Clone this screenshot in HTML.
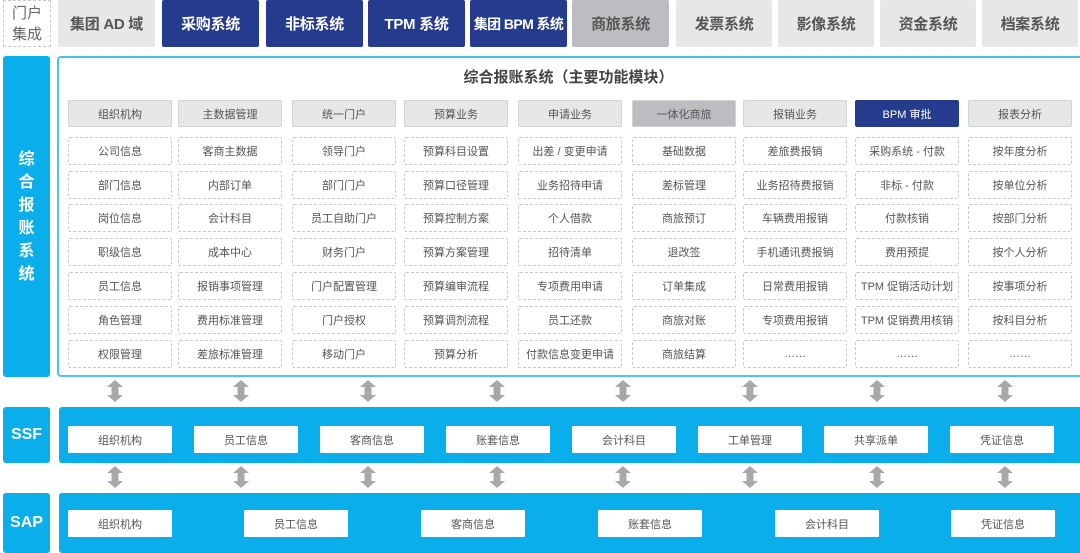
<!DOCTYPE html>
<html><head><meta charset="utf-8"><style>
*{margin:0;padding:0;box-sizing:border-box}
body{width:1080px;height:553px;background:#fff;position:relative;overflow:hidden;font-family:"Liberation Sans","Noto Sans CJK SC",sans-serif;color:#555}
.a{position:absolute;display:flex;align-items:center;justify-content:center;text-align:center;white-space:nowrap}
.t{top:0;height:47px;font-size:15px;font-weight:bold;border-radius:2px;letter-spacing:-0.3px}
.g{background:#e6e7e9;color:#555}
.n{background:#253b8d;color:#fff}
.d{background:#bcbdc0;color:#555}
.h{height:27px;font-size:11px;border:1px solid #d2d3d5;border-radius:2px;background:#e6e7e9;color:#555}
.c{height:28px;font-size:11px;border:1px dashed #c9c9c9;border-radius:2px;color:#555}
.b{background:#0aaeeb;color:#fff;font-weight:bold;border-radius:3px}
.w{background:#fff;height:27px;font-size:11px;color:#555;border-radius:1px}
</style></head><body>
<div class="a" style="left:3px;top:0;width:48px;height:47px;border:1px dashed #c9c9c9;font-size:15px;line-height:21px;color:#666;white-space:normal">门户<br>集成</div>
<div class="a t g" style="left:58px;width:97px">集团 AD 域</div>
<div class="a t n" style="left:162px;width:97px">采购系统</div>
<div class="a t n" style="left:266px;width:97px">非标系统</div>
<div class="a t n" style="left:368px;width:97px">TPM 系统</div>
<div class="a t n" style="left:470px;width:97px;font-size:14px;letter-spacing:-0.6px">集团 BPM 系统</div>
<div class="a t d" style="left:572px;width:97px">商旅系统</div>
<div class="a t g" style="left:676px;width:96px">发票系统</div>
<div class="a t g" style="left:778px;width:96px">影像系统</div>
<div class="a t g" style="left:880px;width:96px">资金系统</div>
<div class="a t g" style="left:982px;width:96px">档案系统</div>

<div class="a b" style="left:3px;top:56px;width:47px;height:321px;font-size:16px;line-height:23px;white-space:normal">综<br>合<br>报<br>账<br>系<br>统</div>
<div style="position:absolute;left:57px;top:56px;width:1030px;height:321px;border:2px solid #4cc3ee;border-radius:4px"></div>
<div class="a" style="left:57px;top:64px;width:1023px;height:24px;font-size:15px;font-weight:bold;color:#444">综合报账系统（主要功能模块）</div>

<div class="a h" style="left:68px;top:100px;width:104px">组织机构</div>
<div class="a h" style="left:178px;top:100px;width:104px">主数据管理</div>
<div class="a h" style="left:292px;top:100px;width:104px">统一门户</div>
<div class="a h" style="left:404px;top:100px;width:104px">预算业务</div>
<div class="a h" style="left:518px;top:100px;width:104px">申请业务</div>
<div class="a h" style="left:632px;top:100px;width:104px;background:#bcbdc0">一体化商旅</div>
<div class="a h" style="left:743px;top:100px;width:104px">报销业务</div>
<div class="a h" style="left:855px;top:100px;width:104px;background:#253b8d;color:#fff;border-color:#253b8d">BPM 审批</div>
<div class="a h" style="left:968px;top:100px;width:104px">报表分析</div>

<div class="a c" style="left:68px;top:137px;width:104px">公司信息</div>
<div class="a c" style="left:68px;top:171px;width:104px">部门信息</div>
<div class="a c" style="left:68px;top:204px;width:104px">岗位信息</div>
<div class="a c" style="left:68px;top:238px;width:104px">职级信息</div>
<div class="a c" style="left:68px;top:272px;width:104px">员工信息</div>
<div class="a c" style="left:68px;top:306px;width:104px">角色管理</div>
<div class="a c" style="left:68px;top:340px;width:104px">权限管理</div>
<div class="a c" style="left:178px;top:137px;width:104px">客商主数据</div>
<div class="a c" style="left:178px;top:171px;width:104px">内部订单</div>
<div class="a c" style="left:178px;top:204px;width:104px">会计科目</div>
<div class="a c" style="left:178px;top:238px;width:104px">成本中心</div>
<div class="a c" style="left:178px;top:272px;width:104px">报销事项管理</div>
<div class="a c" style="left:178px;top:306px;width:104px">费用标准管理</div>
<div class="a c" style="left:178px;top:340px;width:104px">差旅标准管理</div>
<div class="a c" style="left:292px;top:137px;width:104px">领导门户</div>
<div class="a c" style="left:292px;top:171px;width:104px">部门门户</div>
<div class="a c" style="left:292px;top:204px;width:104px">员工自助门户</div>
<div class="a c" style="left:292px;top:238px;width:104px">财务门户</div>
<div class="a c" style="left:292px;top:272px;width:104px">门户配置管理</div>
<div class="a c" style="left:292px;top:306px;width:104px">门户授权</div>
<div class="a c" style="left:292px;top:340px;width:104px">移动门户</div>
<div class="a c" style="left:404px;top:137px;width:104px">预算科目设置</div>
<div class="a c" style="left:404px;top:171px;width:104px">预算口径管理</div>
<div class="a c" style="left:404px;top:204px;width:104px">预算控制方案</div>
<div class="a c" style="left:404px;top:238px;width:104px">预算方案管理</div>
<div class="a c" style="left:404px;top:272px;width:104px">预算编审流程</div>
<div class="a c" style="left:404px;top:306px;width:104px">预算调剂流程</div>
<div class="a c" style="left:404px;top:340px;width:104px">预算分析</div>
<div class="a c" style="left:518px;top:137px;width:104px">出差 / 变更申请</div>
<div class="a c" style="left:518px;top:171px;width:104px">业务招待申请</div>
<div class="a c" style="left:518px;top:204px;width:104px">个人借款</div>
<div class="a c" style="left:518px;top:238px;width:104px">招待清单</div>
<div class="a c" style="left:518px;top:272px;width:104px">专项费用申请</div>
<div class="a c" style="left:518px;top:306px;width:104px">员工还款</div>
<div class="a c" style="left:518px;top:340px;width:104px">付款信息变更申请</div>
<div class="a c" style="left:632px;top:137px;width:104px">基础数据</div>
<div class="a c" style="left:632px;top:171px;width:104px">差标管理</div>
<div class="a c" style="left:632px;top:204px;width:104px">商旅预订</div>
<div class="a c" style="left:632px;top:238px;width:104px">退改签</div>
<div class="a c" style="left:632px;top:272px;width:104px">订单集成</div>
<div class="a c" style="left:632px;top:306px;width:104px">商旅对账</div>
<div class="a c" style="left:632px;top:340px;width:104px">商旅结算</div>
<div class="a c" style="left:743px;top:137px;width:104px">差旅费报销</div>
<div class="a c" style="left:743px;top:171px;width:104px">业务招待费报销</div>
<div class="a c" style="left:743px;top:204px;width:104px">车辆费用报销</div>
<div class="a c" style="left:743px;top:238px;width:104px">手机通讯费报销</div>
<div class="a c" style="left:743px;top:272px;width:104px">日常费用报销</div>
<div class="a c" style="left:743px;top:306px;width:104px">专项费用报销</div>
<div class="a c" style="left:743px;top:340px;width:104px">……</div>
<div class="a c" style="left:855px;top:137px;width:104px">采购系统 - 付款</div>
<div class="a c" style="left:855px;top:171px;width:104px">非标 - 付款</div>
<div class="a c" style="left:855px;top:204px;width:104px">付款核销</div>
<div class="a c" style="left:855px;top:238px;width:104px">费用预提</div>
<div class="a c" style="left:855px;top:272px;width:104px">TPM 促销活动计划</div>
<div class="a c" style="left:855px;top:306px;width:104px">TPM 促销费用核销</div>
<div class="a c" style="left:855px;top:340px;width:104px">……</div>
<div class="a c" style="left:968px;top:137px;width:104px">按年度分析</div>
<div class="a c" style="left:968px;top:171px;width:104px">按单位分析</div>
<div class="a c" style="left:968px;top:204px;width:104px">按部门分析</div>
<div class="a c" style="left:968px;top:238px;width:104px">按个人分析</div>
<div class="a c" style="left:968px;top:272px;width:104px">按事项分析</div>
<div class="a c" style="left:968px;top:306px;width:104px">按科目分析</div>
<div class="a c" style="left:968px;top:340px;width:104px">……</div>

<svg width="1080" height="553" style="position:absolute;left:0;top:0">
<defs><polygon id="ar" points="0,-11 8,-4 3.5,-4 3.5,4 8,4 0,11 -8,4 -3.5,4 -3.5,-4 -8,-4" fill="#a7a8ab"/></defs>
<g transform="translate(0,391)">
<use href="#ar" x="115"/><use href="#ar" x="241"/><use href="#ar" x="368"/><use href="#ar" x="497"/><use href="#ar" x="623"/><use href="#ar" x="750"/><use href="#ar" x="877"/><use href="#ar" x="1005"/>
</g>
<g transform="translate(0,477)">
<use href="#ar" x="115"/><use href="#ar" x="241"/><use href="#ar" x="368"/><use href="#ar" x="497"/><use href="#ar" x="623"/><use href="#ar" x="750"/><use href="#ar" x="877"/><use href="#ar" x="1005"/>
</g>
</svg>

<div class="a b" style="left:3px;top:407px;width:47px;height:56px;font-size:16px">SSF</div>
<div class="b" style="position:absolute;left:59px;top:407px;width:1030px;height:56px"></div>
<div class="a w" style="left:68px;top:426px;width:104px">组织机构</div>
<div class="a w" style="left:194px;top:426px;width:104px">员工信息</div>
<div class="a w" style="left:320px;top:426px;width:104px">客商信息</div>
<div class="a w" style="left:446px;top:426px;width:104px">账套信息</div>
<div class="a w" style="left:572px;top:426px;width:104px">会计科目</div>
<div class="a w" style="left:698px;top:426px;width:104px">工单管理</div>
<div class="a w" style="left:824px;top:426px;width:104px">共享派单</div>
<div class="a w" style="left:950px;top:426px;width:104px">凭证信息</div>

<div class="a b" style="left:3px;top:493px;width:47px;height:60px;font-size:16px">SAP</div>
<div class="b" style="position:absolute;left:59px;top:493px;width:1030px;height:60px"></div>
<div class="a w" style="left:68px;top:510px;width:104px">组织机构</div>
<div class="a w" style="left:244px;top:510px;width:104px">员工信息</div>
<div class="a w" style="left:421px;top:510px;width:104px">客商信息</div>
<div class="a w" style="left:598px;top:510px;width:104px">账套信息</div>
<div class="a w" style="left:775px;top:510px;width:104px">会计科目</div>
<div class="a w" style="left:951px;top:510px;width:104px">凭证信息</div>
</body></html>
